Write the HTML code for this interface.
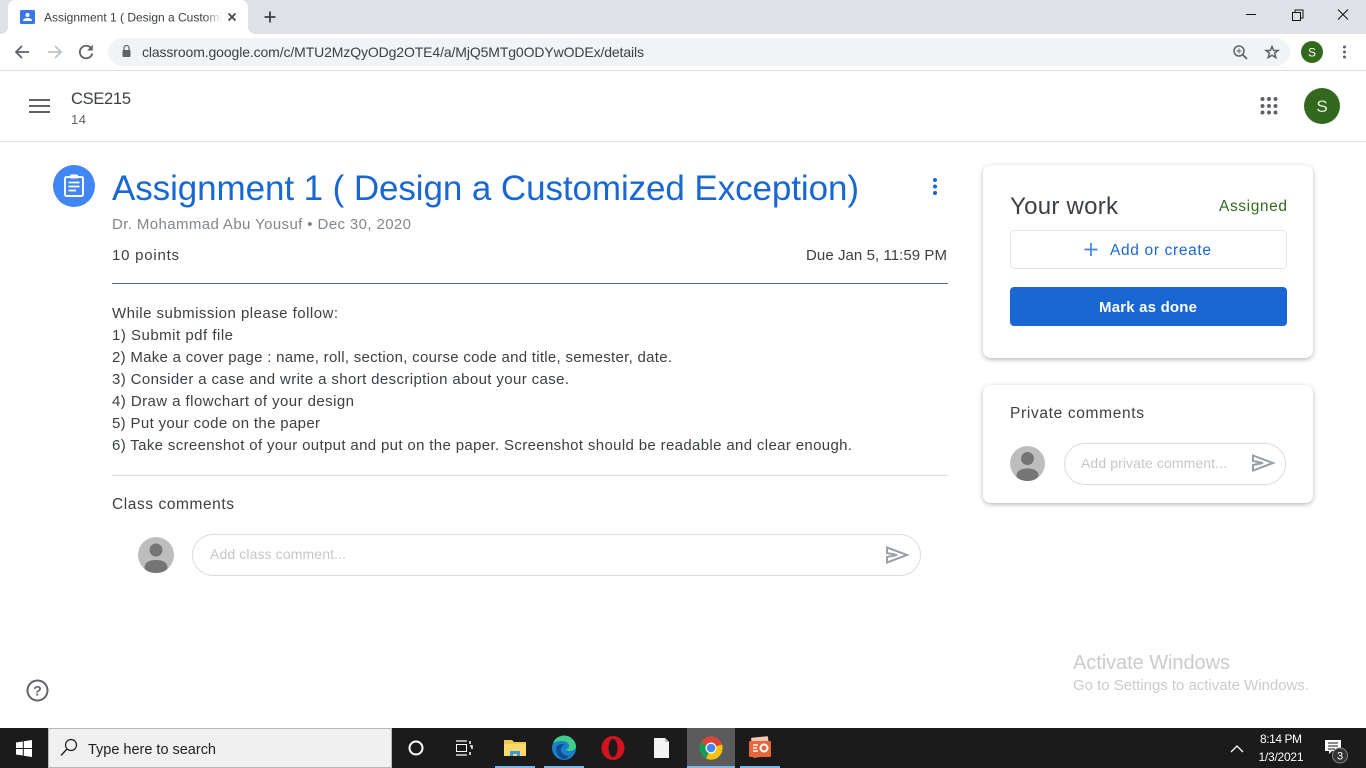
<!DOCTYPE html>
<html lang="en"><head><meta charset="utf-8"><title>Assignment 1</title>
<style>
html,body{margin:0;padding:0;width:1366px;height:768px;overflow:hidden;background:#fff}
svg{display:block;position:absolute;left:0;top:0}
text{font-family:"Liberation Sans",sans-serif;white-space:pre}
</style></head><body>
<svg width="1366" height="768" viewBox="0 0 1366 768" xmlns="http://www.w3.org/2000/svg">
<defs>
<filter id="sh" x="-10%" y="-15%" width="120%" height="130%"><feDropShadow dx="0" dy="1.5" stdDeviation="2.5" flood-color="#3c4043" flood-opacity=".38"/></filter>
<linearGradient id="fade" x1="0" x2="1"><stop offset="0" stop-color="#fff" stop-opacity="0"/><stop offset="1" stop-color="#fff"/></linearGradient>
</defs>
<!-- browser chrome -->
<rect width="1366" height="34" fill="#dee1e6"/>
<path d="M0 34Q8 34 8 26V8Q8 0 16 0H240Q248 0 248 8V26Q248 34 256 34Z" fill="#fff"/>
<rect x="20" y="10" width="15" height="14" rx="1.5" fill="#3b78e7"/>
<circle cx="27.500" cy="15" r="2" fill="#fff"/><path d="M23 21q0-3 4.500-3t4.500 3z" fill="#fff"/>
<text x="44" y="21.500" font-size="12" fill="#3c4043" textLength="178" lengthAdjust="spacing">Assignment 1 ( Design a Customi</text>
<rect x="204" y="8" width="18" height="18" fill="url(#fade)"/>
<path d="M228.500 13.500l7 7M235.500 13.500l-7 7" stroke="#45494d" stroke-width="1.800" fill="none"/>
<path d="M270 11.500v11M264.500 17h11" stroke="#3c4043" stroke-width="1.800" fill="none"/>
<path d="M1246 14.500h10" stroke="#111" stroke-width="1"/>
<path d="M1292.500 12.500h8v8h-8zM1295 12.500v-2.500h8v8h-2.500" fill="none" stroke="#111" stroke-width="1"/>
<path d="M1338 9.500l10 10M1348 9.500l-10 10" stroke="#111" stroke-width="1"/>
<rect y="34" width="1366" height="36" fill="#fff"/>
<rect y="70" width="1366" height="1" fill="#dadce0"/>
<path d="M29 52H16M22 46l-6 6 6 6" fill="none" stroke="#5f6368" stroke-width="1.800"/>
<path d="M48 52h13M55 46l6 6-6 6" fill="none" stroke="#bdc1c6" stroke-width="1.800"/>
<path d="M91 48a6.300 6.300 0 1 0 1.300 5.500" fill="none" stroke="#5f6368" stroke-width="1.800"/>
<path d="M92.800 44.800v5.700h-5.700z" fill="#5f6368"/>
<rect x="108" y="38" width="1182" height="28" rx="14" fill="#f1f3f4"/>
<rect x="122.500" y="50" width="8" height="7" rx="1" fill="#5f6368"/>
<path d="M124 50v-2a2.500 2.500 0 0 1 5 0v2" fill="none" stroke="#5f6368" stroke-width="1.200"/>
<text x="142" y="57" font-size="14" fill="#3c4043" textLength="502" lengthAdjust="spacing">classroom.google.com/c/MTU2MzQyODg2OTE4/a/MjQ5MTg0ODYwODEx/details</text>
<circle cx="1239" cy="51" r="5" fill="none" stroke="#5f6368" stroke-width="1.500"/>
<path d="M1243 55l4 4" stroke="#5f6368" stroke-width="1.800"/>
<path d="M1239 48.500v5M1236.500 51h5" stroke="#5f6368" stroke-width="1"/>
<path d="M1272 46.500l1.700 4h4.300l-3.400 2.800 1.200 4.300-3.800-2.400-3.800 2.400 1.200-4.300-3.400-2.800h4.300z" fill="none" stroke="#5f6368" stroke-width="1.500"/>
<circle cx="1312" cy="52" r="11" fill="#33691e"/>
<text x="1312" y="56.500" font-size="12" fill="#fff" text-anchor="middle">S</text>
<g fill="#5f6368"><circle cx="1344.500" cy="47" r="1.500"/><circle cx="1344.500" cy="52" r="1.500"/><circle cx="1344.500" cy="57" r="1.500"/></g>
<!-- classroom header -->
<rect y="141" width="1366" height="1" fill="#e0e0e0"/>
<path d="M29 100h21M29 106h21M29 112h21" stroke="#5f6368" stroke-width="2"/>
<text x="71" y="104" font-size="16.500" fill="#3c4043" textLength="60" lengthAdjust="spacing">CSE215</text>
<text x="71" y="124" font-size="13" fill="#5f6368" textLength="15" lengthAdjust="spacing">14</text>
<g fill="#5f6368">
<circle cx="1262.500" cy="99" r="2"/><circle cx="1269" cy="99" r="2"/><circle cx="1275.500" cy="99" r="2"/>
<circle cx="1262.500" cy="106" r="2"/><circle cx="1269" cy="106" r="2"/><circle cx="1275.500" cy="106" r="2"/>
<circle cx="1262.500" cy="112.500" r="2"/><circle cx="1269" cy="112.500" r="2"/><circle cx="1275.500" cy="112.500" r="2"/>
</g>
<circle cx="1322" cy="106" r="18" fill="#33691e"/>
<text x="1322" y="112" font-size="17" fill="#e6efe0" text-anchor="middle">S</text>
<!-- assignment -->
<circle cx="74" cy="186" r="21" fill="#4285f4"/>
<rect x="65" y="177" width="18" height="19" rx="1.500" fill="none" stroke="#fff" stroke-width="2"/>
<rect x="70" y="174.500" width="8" height="4" rx="1" fill="#fff"/>
<path d="M68.500 182.500h11M68.500 186.500h11M68.500 190.500h7.500" stroke="#fff" stroke-width="1.800"/>
<text x="112" y="200" font-size="35" fill="#1967d2" textLength="747" lengthAdjust="spacing">Assignment 1 ( Design a Customized Exception)</text>
<g fill="#1967d2"><circle cx="935" cy="180" r="2"/><circle cx="935" cy="186.500" r="2"/><circle cx="935" cy="193" r="2"/></g>
<text x="112" y="229" font-size="15" fill="#80868b" textLength="299" lengthAdjust="spacing">Dr. Mohammad Abu Yousuf • Dec 30, 2020</text>
<text x="112" y="260" font-size="15" fill="#3c4043" textLength="67" lengthAdjust="spacing">10 points</text>
<text x="806" y="260" font-size="15" fill="#3c4043" textLength="141" lengthAdjust="spacing">Due Jan 5, 11:59 PM</text>
<rect x="112" y="283" width="836" height="1" fill="#5f6b7a"/>
<g font-size="15" fill="#3c4043">
<text x="112" y="318" textLength="226" lengthAdjust="spacing">While submission please follow:</text>
<text x="112" y="340" textLength="121" lengthAdjust="spacing">1) Submit pdf file</text>
<text x="112" y="362" textLength="560" lengthAdjust="spacing">2) Make a cover page : name, roll, section, course code and title, semester, date.</text>
<text x="112" y="384" textLength="457" lengthAdjust="spacing">3) Consider a case and write a short description about your case.</text>
<text x="112" y="406" textLength="242" lengthAdjust="spacing">4) Draw a flowchart of your design</text>
<text x="112" y="428" textLength="208" lengthAdjust="spacing">5) Put your code on the paper</text>
<text x="112" y="450" textLength="740" lengthAdjust="spacing">6) Take screenshot of your output and put on the paper. Screenshot should be readable and clear enough.</text>
</g>
<rect x="112" y="475" width="836" height="1" fill="#dadce0"/>
<text x="112" y="509" font-size="15.500" fill="#3c4043" textLength="122" lengthAdjust="spacing">Class comments</text>
<circle cx="156" cy="555" r="18" fill="#bdbdbd"/>
<circle cx="156" cy="550" r="6.500" fill="#757575"/>
<path d="M144.500 568c0-6 5-8 11.500-8s11.500 2 11.500 8c0 2-5 5-11.500 5s-11.500-3-11.500-5z" fill="#757575"/>
<rect x="192.500" y="534.500" width="728" height="41" rx="20.500" fill="#fff" stroke="#dadce0"/>
<text x="210" y="559" font-size="14" fill="#c4c7c9" textLength="136" lengthAdjust="spacing">Add class comment...</text>
<path d="M887 547.500l20 7.500-20 7.500v-5.500l10-2-10-2z" fill="none" stroke="#9aa0a6" stroke-width="2" stroke-linejoin="miter"/>
<!-- your work card -->
<rect x="983" y="165" width="330" height="193" rx="8" fill="#fff" filter="url(#sh)"/>
<text x="1010" y="214" font-size="24" fill="#3c4043" textLength="108" lengthAdjust="spacing">Your work</text>
<text x="1219" y="211" font-size="15.500" fill="#33691e" textLength="68" lengthAdjust="spacing">Assigned</text>
<rect x="1010.500" y="230.500" width="276" height="38" rx="4" fill="#fff" stroke="#e3e5e8"/>
<path d="M1091 243v13M1084.500 249.500h13" stroke="#4285e0" stroke-width="1.700"/>
<text x="1110" y="255" font-size="15.500" fill="#1967d2" textLength="101" lengthAdjust="spacing">Add or create</text>
<rect x="1010" y="287" width="277" height="39" rx="4" fill="#1967d2"/>
<text x="1099" y="312" font-size="15" font-weight="bold" fill="#fff" textLength="98" lengthAdjust="spacing">Mark as done</text>
<!-- private comments -->
<rect x="983" y="385" width="330" height="118" rx="8" fill="#fff" filter="url(#sh)"/>
<text x="1010" y="418" font-size="15.500" fill="#3c4043" textLength="134" lengthAdjust="spacing">Private comments</text>
<circle cx="1027.500" cy="463.500" r="17.500" fill="#bdbdbd"/>
<circle cx="1027.500" cy="458.500" r="6.500" fill="#757575"/>
<path d="M1016.500 476c0-5.500 5-7.500 11-7.500s11 2 11 7.500c0 2-5 5-11 5s-11-3-11-5z" fill="#757575"/>
<rect x="1064.500" y="443.500" width="221" height="41" rx="20.500" fill="#fff" stroke="#dadce0"/>
<text x="1081" y="468" font-size="14" fill="#c4c7c9" textLength="146" lengthAdjust="spacing">Add private comment...</text>
<path d="M1253 455.500l20 7.500-20 7.500v-5.500l10-2-10-2z" fill="none" stroke="#9aa0a6" stroke-width="2"/>
<!-- help -->
<circle cx="37.500" cy="690.500" r="10" fill="none" stroke="#5f6368" stroke-width="2"/>
<text x="37.500" y="695.500" font-size="14" font-weight="bold" fill="#5f6368" text-anchor="middle">?</text>
<!-- watermark -->
<text x="1073" y="669" font-size="20" fill="#c9cbcd" textLength="157" lengthAdjust="spacing">Activate Windows</text>
<text x="1073" y="690" font-size="15" fill="#c9cbcd" textLength="236" lengthAdjust="spacing">Go to Settings to activate Windows.</text>
<!-- taskbar -->
<rect y="728" width="1366" height="40" fill="#1b1b1b"/>
<path d="M16 742.500l6.800-1v6.500H16zM23.800 741.300l8.200-1.300v8H23.800zM16 749h6.800v6.500l-6.800-1zM23.800 749H32v8l-8.200-1.200z" fill="#fff"/>
<rect x="48.500" y="728.500" width="343" height="39" fill="#f0f0f0" stroke="#b8b8b8"/>
<circle cx="71" cy="745" r="5.500" fill="none" stroke="#1f1f1f" stroke-width="1.200"/>
<path d="M67 749l-6 6.500" stroke="#1f1f1f" stroke-width="1.300"/>
<text x="88" y="754" font-size="14.500" fill="#1f1f1f" textLength="128" lengthAdjust="spacing">Type here to search</text>
<circle cx="416" cy="748" r="6.500" fill="none" stroke="#fff" stroke-width="2"/>
<path d="M456 741h11M456 755h11" stroke="#fff" stroke-width="1.200"/>
<rect x="456.500" y="744.500" width="10" height="7" fill="none" stroke="#fff"/>
<path d="M470 741v3M470 746h2v3M470 752v3" stroke="#fff" stroke-width="1.500"/>
<!-- folder -->
<path d="M504 740h8l2 2h12v14h-22z" fill="#f3c64d"/>
<rect x="504" y="744" width="22" height="12" fill="#fbd96b"/>
<path d="M510 756v-5h10v5h-3v-2h-4v2z" fill="#3a9bd9"/>
<rect x="495" y="766" width="40" height="2" fill="#76b9ed"/>
<!-- edge -->
<circle cx="564" cy="748" r="12" fill="#1b7fc9"/>
<path d="M553 743a12 12 0 0 1 23 3c0 3-3 5-6 5-2 0-4-1-4-2 2 0 3-1 3-3 0-3-3-5-7-5-4 0-7 1-9 2z" fill="#3ed08a"/>
<path d="M556 749c0-3 3-5 6-5 1 0 2 .5 2.500 1-3 1-4 3-3.500 6 1 3 4 5 8 5-2 2-3 3-6 3-5-2-7-6-7-10z" fill="#0d4f94"/>
<rect x="544" y="766" width="40" height="2" fill="#76b9ed"/>
<!-- opera -->
<ellipse cx="613" cy="748" rx="11.500" ry="12" fill="#d3131f"/>
<ellipse cx="613" cy="748" rx="4.500" ry="9" fill="#1b1b1b"/>
<!-- file -->
<path d="M654 738h11l4 4v16h-15z" fill="#f4f4f4"/>
<path d="M665 738v4h4z" fill="#c8c8c8"/>
<!-- chrome -->
<rect x="687" y="728" width="48" height="40" fill="#5b5b5b"/>
<circle cx="711" cy="748" r="11.500" fill="#db4437"/>
<path d="M711 748l-10 -5.500a11.500 11.500 0 0 0 5 15.800z" fill="#0f9d58"/>
<path d="M711 748l11 -3.500a11.500 11.500 0 0 1 -16 14z" fill="#f4c20d"/>
<path d="M701.500 741.500a11.500 11.500 0 0 1 20.500 3h-11z" fill="#db4437"/>
<circle cx="711" cy="748" r="5.500" fill="#fff"/><circle cx="711" cy="748" r="4.300" fill="#4285f4"/>
<rect x="687" y="766" width="48" height="2" fill="#76b9ed"/>
<!-- powerpoint -->
<rect x="752" y="737" width="17" height="20" rx="1" fill="#f7c9b5" transform="rotate(-6 760 747)"/>
<rect x="749" y="741" width="22" height="16" rx="1" fill="#e9653b"/>
<path d="M753 745h5M753 748h4M753 751h5" stroke="#fff" stroke-width="1.500"/>
<circle cx="764" cy="748" r="3.500" fill="none" stroke="#fff" stroke-width="2"/>
<rect x="740" y="766" width="40" height="2" fill="#76b9ed"/>
<!-- tray -->
<path d="M1231 752l6-6 6 6" fill="none" stroke="#fff" stroke-width="1.300"/>
<text x="1281" y="743" font-size="12" fill="#fff" text-anchor="middle" textLength="42" lengthAdjust="spacing">8:14 PM</text>
<text x="1281" y="761" font-size="12" fill="#fff" text-anchor="middle" textLength="45" lengthAdjust="spacing">1/3/2021</text>
<path d="M1325 740h16v11h-9l-3 3v-3h-4z" fill="#fff"/>
<path d="M1328 743h10M1328 746h10M1328 749h7" stroke="#1b1b1b" stroke-width="1"/>
<circle cx="1340" cy="755.500" r="7.500" fill="#333" stroke="#888"/>
<text x="1340" y="759.500" font-size="11" fill="#fff" text-anchor="middle">3</text>
</svg>
</body></html>
